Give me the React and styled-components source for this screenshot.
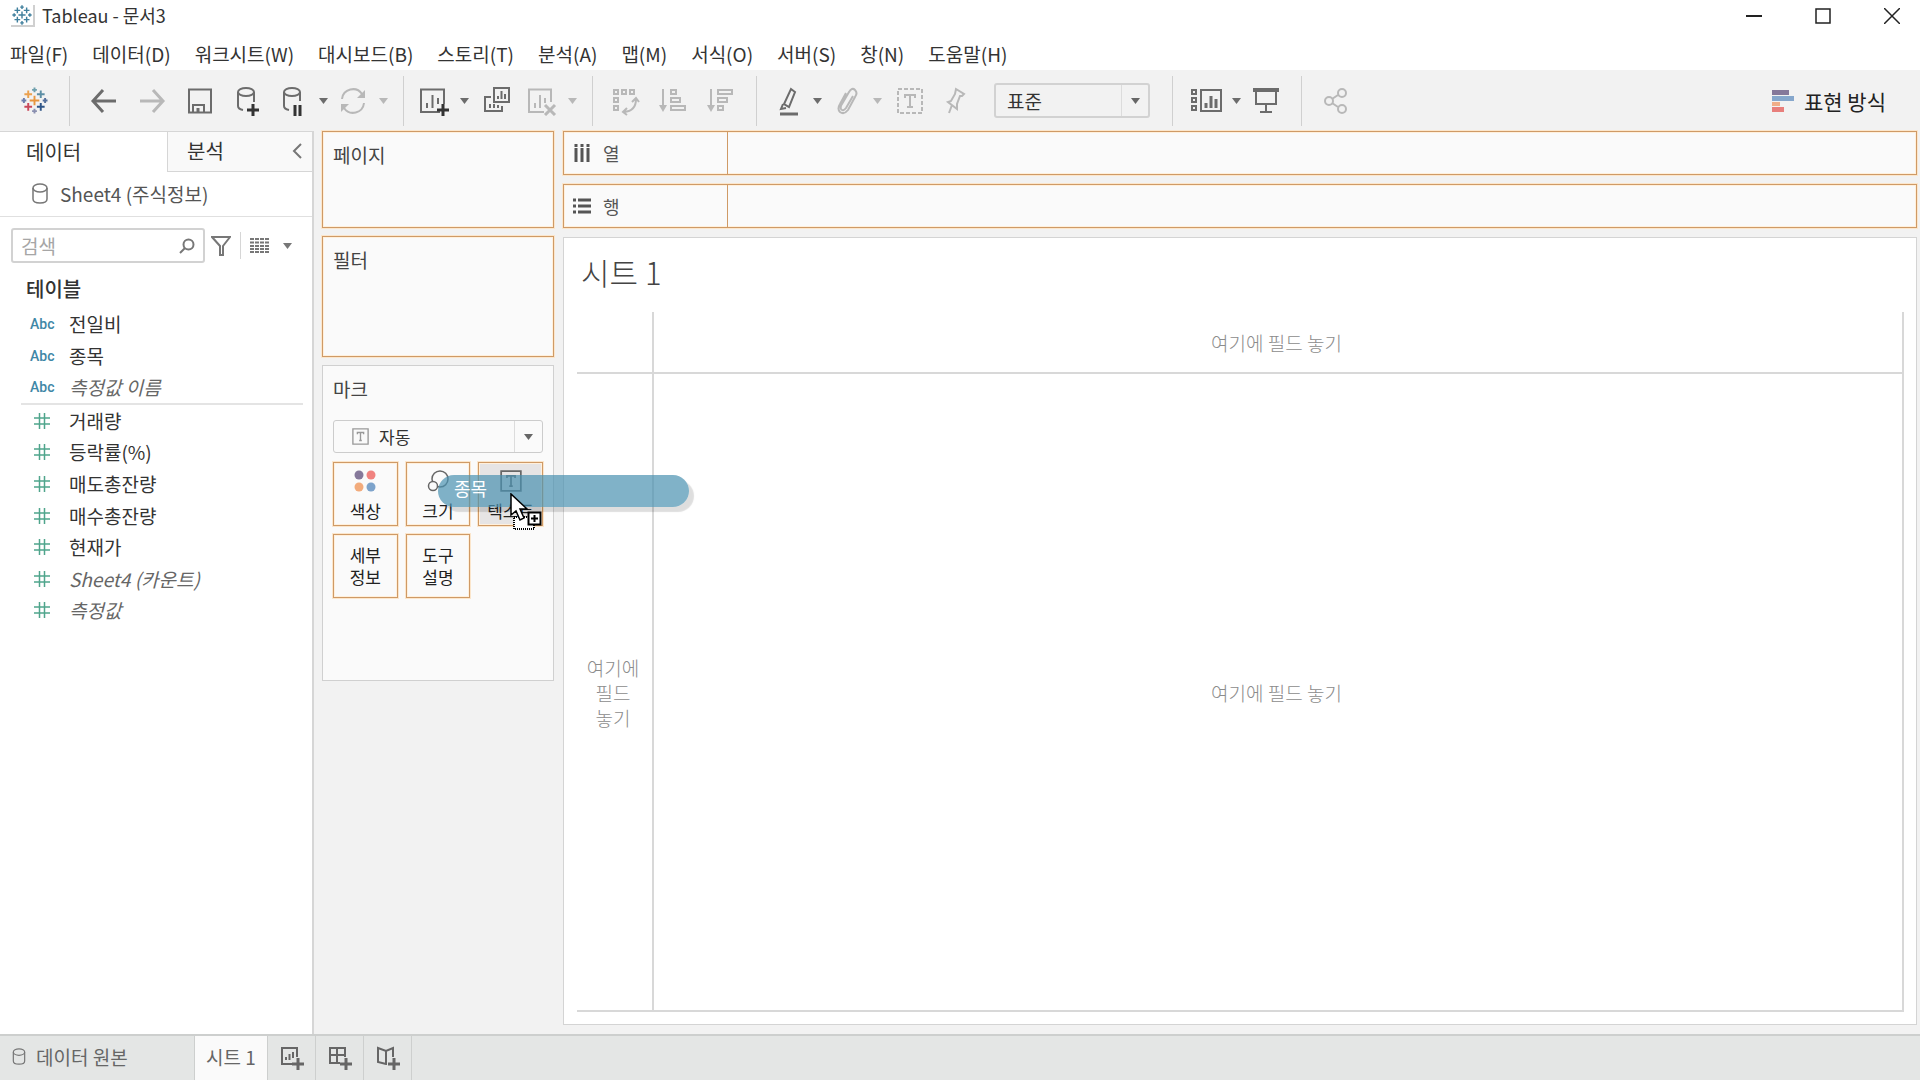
import React, { useState } from "react";
import styled, { createGlobalStyle, css } from "styled-components";

const menus = [
  "파일(F)",
  "데이터(D)",
  "워크시트(W)",
  "대시보드(B)",
  "스토리(T)",
  "분석(A)",
  "맵(M)",
  "서식(O)",
  "서버(S)",
  "창(N)",
  "도움말(H)",
];

const dimensions = [
  { name: "전일비" },
  { name: "종목" },
  { name: "측정값 이름", auto: true },
];

const measures = [
  { name: "거래량" },
  { name: "등락률(%)" },
  { name: "매도총잔량" },
  { name: "매수총잔량" },
  { name: "현재가" },
  { name: "Sheet4 (카운트)", auto: true },
  { name: "측정값", auto: true },
];

// icons

const Icon = ({ w = 30, h = 30, children, ...rest }) => (
  <svg
    width={w}
    height={h}
    viewBox={`0 0 ${w} ${h}`}
    fill="none"
    stroke="currentColor"
    strokeWidth="2"
    aria-hidden="true"
    {...rest}
  >
    {children}
  </svg>
);

const Caret = () => (
  <svg width="9" height="6" viewBox="0 0 9 6" aria-hidden="true">
    <path d="M0 0h9L4.5 6z" fill="currentColor" />
  </svg>
);

const logoMarks = [
  [14, 14, 5, "#e8963f"],
  [7.5, 7.5, 4, "#eba14e"],
  [20.5, 7.5, 4, "#5d8fa5"],
  [7.5, 20.5, 4, "#c9485a"],
  [20.5, 20.5, 4, "#2f5587"],
  [14, 3, 2.5, "#6fa0ad"],
  [14, 25, 2.5, "#8a8fb0"],
  [3, 14, 2.5, "#6d7fae"],
  [25, 14, 2.5, "#55709c"],
];

const TableauLogo = ({ size, color }) => (
  <svg width={size} height={size} viewBox="0 0 28 28" aria-hidden="true">
    {logoMarks.map(([x, y, r, fill]) => (
      <path
        key={`${x}-${y}`}
        d={`M${x - r} ${y}h${r * 2}M${x} ${y - r}v${r * 2}`}
        stroke={color || fill}
        strokeWidth="2"
      />
    ))}
  </svg>
);

const BackIcon = () => (
  <Icon strokeWidth="3">
    <path d="M27 15H5M14 4L4 15l10 11" />
  </Icon>
);

const ForwardIcon = () => (
  <Icon strokeWidth="3">
    <path d="M3 15h23M16 4l10 11-10 11" />
  </Icon>
);

const SaveIcon = () => (
  <Icon>
    <path d="M4 3.500h22v23H4zM8 26v-7h11v7" />
    <path d="M13 26v-4" strokeWidth="3" />
  </Icon>
);

const DbAddIcon = () => (
  <Icon>
    <ellipse cx="13" cy="6" rx="8" ry="4" />
    <path d="M5 6v14q0 3 5 4M21 6v10" />
    <path d="M20 18v12M14 24h12" stroke="#333" strokeWidth="3" />
  </Icon>
);

const DbPauseIcon = () => (
  <Icon>
    <ellipse cx="14" cy="6" rx="8" ry="4" />
    <path d="M6 6v14q0 3 5 4M22 6v9" />
    <path d="M17 19v11M22 19v11" stroke="#333" strokeWidth="3" />
  </Icon>
);

const RefreshIcon = () => (
  <Icon>
    <path d="M4 13A11 11 0 0 1 24 8M26 17A11 11 0 0 1 6 22" />
    <path d="M27 4v8h-8zM3 26v-8h8z" fill="currentColor" stroke="none" />
  </Icon>
);

const NewSheetIcon = () => (
  <Icon>
    <path d="M21 26H2V3.500h23V18" />
    <path d="M8 22v-5M13.500 22V9M19 18v-6" />
    <path d="M24 18v12M18 24h12" stroke="#333" strokeWidth="3" />
  </Icon>
);

const DuplicateIcon = () => (
  <Icon>
    <path d="M12 2h15v14H12zM9 11H3v14h17v-5" />
    <path d="M16 13v-3M19.500 13V5M23 13V8M8 22v-4M12 22v-4M16 22v-3" />
  </Icon>
);

const ClearIcon = () => (
  <Icon>
    <path d="M17 26H2V3.500h22V16" />
    <path d="M8 22v-5M13 22V9M18 17v-5" />
    <path d="M18 19l10 10M28 19L18 29" strokeWidth="3" />
  </Icon>
);

const SwapIcon = () => (
  <Icon>
    <path d="M4 4h4v4H4zM12 4h4v4h-4zM20 4h4v4h-4zM4 12h4v4H4zM4 20h4v4H4z" />
    <path d="M26 13q0 12-12 13M22 16l4-4 3 4M17 22l-4 4 4 3" />
  </Icon>
);

const SortAscIcon = () => (
  <Icon>
    <path d="M5 3v18" />
    <path d="M1 19h8l-4 7z" fill="currentColor" stroke="none" />
    <path d="M13 4h5v4h-5zM13 12h9v4h-9zM13 20h14v4H13z" />
  </Icon>
);

const SortDescIcon = () => (
  <Icon>
    <path d="M5 3v18" />
    <path d="M1 19h8l-4 7z" fill="currentColor" stroke="none" />
    <path d="M12 4h14v4H12zM12 12h9v4h-9zM12 20h5v4h-5z" />
  </Icon>
);

const HighlightIcon = () => (
  <Icon>
    <path d="M19 3l4 3-6 15-5-3zM11 18l-2 5 5-1" />
    <path d="M8 28h18" strokeWidth="3" />
  </Icon>
);

const ClipIcon = () => (
  <Icon>
    <path d="M21 10l-7 12q-3 4-5 1-1-2 1-5l7-12q3-5 6-2t0 7l-7 13q-4 5-8 2-3-3 0-8l6-11" />
  </Icon>
);

const LabelIcon = () => (
  <Icon>
    <path d="M3 3h24v24H3z" strokeDasharray="4 2" />
    <path d="M10 12V9h10v3M15 9v12M12 21h6" />
  </Icon>
);

const PinIcon = () => (
  <Icon>
    <path d="M16 3l8 5-2 2-2 0-3 8v5L8 16l3-1 4-7zM12 19l-3 8" />
  </Icon>
);

const CardsIcon = () => (
  <Icon w={32}>
    <path d="M2 4h4v4H2zM2 12h4v4H2zM2 20h4v4H2zM11 4h20v21H11z" />
    <path d="M16 22v-5M21 22v-12M26 22v-9" strokeWidth="3" />
  </Icon>
);

const PresentIcon = () => (
  <Icon>
    <path d="M2 4h26" strokeWidth="4" />
    <path d="M5 6v12h20V6M15 18v8M9 26h12" />
  </Icon>
);

const ShareIcon = () => (
  <Icon>
    <circle cx="8" cy="15" r="4" />
    <circle cx="21" cy="7" r="4" />
    <circle cx="21" cy="23" r="4" />
    <path d="M11 13l6-4M11 17l6 4" />
  </Icon>
);

const ShowMeIcon = () => (
  <svg width="22" height="24" viewBox="0 0 22 24" aria-hidden="true">
    <path d="M0 1h17v5H0z" fill="#85789a" />
    <path d="M0 7h22v5H0z" fill="#86a7cc" />
    <path d="M0 13h8v4H0z" fill="#f0ae88" />
    <path d="M0 18h12v5H0z" fill="#e87f7c" />
  </svg>
);

const DbIcon = ({ w = 16, h = 21 }) => (
  <svg
    width={w}
    height={h}
    viewBox="0 0 16 21"
    fill="none"
    stroke="#777"
    strokeWidth="1.500"
    aria-hidden="true"
  >
    <path d="M1 5v11q0 4 7 4t7-4V5" />
    <ellipse cx="8" cy="5" rx="7" ry="4" />
  </svg>
);

const HashIcon = () => (
  <Icon w={16} h={16} strokeWidth="1.500">
    <path d="M5.500 0v16M10.500 0v16M0 5h16M0 11h16" />
  </Icon>
);

const SearchIcon = () => (
  <Icon w={16} h={16}>
    <circle cx="9.500" cy="6.500" r="5" />
    <path d="M6 10l-5 5" />
  </Icon>
);

const FunnelIcon = () => (
  <Icon w={20} h={20}>
    <path d="M1 1h18l-7 9v9H9v-9z" />
  </Icon>
);

const GridIcon = () => (
  <Icon w={19} h={15}>
    <path d="M0 1h19M0 4.500h19M0 8h19M0 11h19M0 14h19" strokeDasharray="4 1" />
  </Icon>
);

const TextMarkIcon = ({ size = 19 }) => (
  <svg
    width={size}
    height={size}
    viewBox="0 0 19 19"
    fill="none"
    stroke="currentColor"
    aria-hidden="true"
  >
    <path d="M1 1h17v17H1z" strokeWidth="1.500" />
    <path d="M6 7V5h7v2M9.500 5v9M8 14h3" strokeWidth="1.500" />
  </svg>
);

const ColorIcon = () => (
  <svg width="22" height="22" viewBox="0 0 22 22" aria-hidden="true">
    <circle cx="5" cy="5" r="4.500" fill="#85789a" />
    <circle cx="17" cy="5" r="4.500" fill="#f0827f" />
    <circle cx="5" cy="17" r="4.500" fill="#f2ab7c" />
    <circle cx="17" cy="17" r="4.500" fill="#7da3cb" />
  </svg>
);

const SizeIcon = () => (
  <Icon w={22} h={22} strokeWidth="1.500">
    <circle cx="13" cy="9" r="8" />
    <circle cx="6" cy="16" r="4.500" fill="#fafafa" />
  </Icon>
);

const ColumnsIcon = () => (
  <Icon w={18} h={18} strokeWidth="3">
    <path d="M3 0v3M9 0v3M15 0v3M3 4v14M9 4v14M15 4v14" />
  </Icon>
);

const RowsIcon = () => (
  <Icon w={18} h={18} strokeWidth="3">
    <path d="M0 3h3M5 3h13M0 9h3M5 9h13M0 15h3M5 15h13" />
  </Icon>
);

const PlusBadge = () => <path d="M18 12v12M12 18h12" strokeWidth="3" />;

const TabSheetIcon = () => (
  <Icon w={24} h={24}>
    <path d="M12 18H2V2h15v9" />
    <path d="M6 14v-3M9.500 14V8M13 12V6" />
    <PlusBadge />
  </Icon>
);

const TabDashIcon = () => (
  <Icon w={24} h={24}>
    <path d="M12 17H2V2h15v9M2 9h15M9 2v15" />
    <PlusBadge />
  </Icon>
);

const TabStoryIcon = () => (
  <Icon w={24} h={24}>
    <path d="M11 18l-1 0-8-2V2l8 3 7-3v9M10 5v13" />
    <PlusBadge />
  </Icon>
);

const CopyCursor = () => (
  <svg width="32" height="40" viewBox="0 0 32 40" aria-hidden="true">
    <path d="M4 24h20v12H4z" fill="#fff" stroke="#000" strokeDasharray="1 1" strokeWidth="2" />
    <path
      d="M1 1v21l5-4 4 9 4-2-4-9h7z"
      fill="#fff"
      stroke="#000"
      strokeWidth="1.500"
    />
    <path d="M18.500 19.500h12v12h-12z" fill="#fff" stroke="#000" strokeWidth="2" />
    <path d="M24.500 22v7M21 25.500h7" stroke="#000" strokeWidth="2" />
  </svg>
);

const App = () => {
  const [search, setSearch] = useState("");
  const [fit, setFit] = useState("표준");
  const [mark, setMark] = useState("자동");

  return (
    <Page>
      <GlobalStyle />
      <TitleBar>
        <AppIcon>
          <TableauLogo size={20} color="#3f7f9d" />
        </AppIcon>
        <TitleText>Tableau - 문서3</TitleText>
        <WindowButtons>
          <WindowButton aria-label="최소화">
            <Icon w={16} h={16}>
              <path d="M0 8h16" />
            </Icon>
          </WindowButton>
          <WindowButton aria-label="최대화">
            <Icon w={16} h={16}>
              <path d="M1 1h14v14H1z" strokeWidth="1.500" />
            </Icon>
          </WindowButton>
          <WindowButton aria-label="닫기">
            <Icon w={16} h={16} strokeWidth="1.500">
              <path d="M0 0l16 16M16 0L0 16" />
            </Icon>
          </WindowButton>
        </WindowButtons>
      </TitleBar>

      <MenuBar>
        {menus.map((m) => (
          <MenuButton key={m}>{m}</MenuButton>
        ))}
      </MenuBar>

      <Toolbar>
        <ToolGroup $left={10} $right={11}>
          <ToolButton aria-label="시작 페이지">
            <TableauLogo size={27} />
          </ToolButton>
        </ToolGroup>
        <ToolGroup $left={10} $right={11}>
          <ToolButton aria-label="실행 취소">
            <BackIcon />
          </ToolButton>
          <ToolButton aria-label="다시 실행" disabled>
            <ForwardIcon />
          </ToolButton>
          <ToolButton aria-label="저장">
            <SaveIcon />
          </ToolButton>
          <ToolButton aria-label="새 데이터 원본">
            <DbAddIcon />
          </ToolButton>
          <ToolButton $split aria-label="자동 업데이트 일시 중지">
            <DbPauseIcon />
          </ToolButton>
          <CaretButton aria-label="자동 업데이트 메뉴">
            <Caret />
          </CaretButton>
          <ToolButton $split aria-label="새로 고침" disabled>
            <RefreshIcon />
          </ToolButton>
          <CaretButton aria-label="새로 고침 메뉴" disabled>
            <Caret />
          </CaretButton>
        </ToolGroup>
        <ToolGroup $left={9} $right={11}>
          <ToolButton $split aria-label="새 워크시트">
            <NewSheetIcon />
          </ToolButton>
          <CaretButton aria-label="새 워크시트 메뉴">
            <Caret />
          </CaretButton>
          <ToolButton aria-label="복제">
            <DuplicateIcon />
          </ToolButton>
          <ToolButton $split aria-label="시트 지우기" disabled>
            <ClearIcon />
          </ToolButton>
          <CaretButton aria-label="시트 지우기 메뉴" disabled>
            <Caret />
          </CaretButton>
        </ToolGroup>
        <ToolGroup $left={8} $right={11}>
          <ToolButton aria-label="바꾸기" disabled>
            <SwapIcon />
          </ToolButton>
          <ToolButton aria-label="오름차순" disabled>
            <SortAscIcon />
          </ToolButton>
          <ToolButton aria-label="내림차순" disabled>
            <SortDescIcon />
          </ToolButton>
        </ToolGroup>
        <ToolGroup $left={9} $right={22}>
          <ToolButton $split aria-label="하이라이트">
            <HighlightIcon />
          </ToolButton>
          <CaretButton aria-label="하이라이트 메뉴">
            <Caret />
          </CaretButton>
          <ToolButton $split aria-label="그룹" disabled>
            <ClipIcon />
          </ToolButton>
          <CaretButton aria-label="그룹 메뉴" disabled>
            <Caret />
          </CaretButton>
          <ToolButton aria-label="레이블 표시" disabled>
            <LabelIcon />
          </ToolButton>
          <ToolButton $split aria-label="축 고정" disabled>
            <PinIcon />
          </ToolButton>
          <FitSelect>
            <Select
              aria-label="맞춤"
              value={fit}
              onChange={(e) => setFit(e.target.value)}
            >
              <option>표준</option>
              <option>전체 보기</option>
            </Select>
            <SelectArrow $width={27}>
              <Caret />
            </SelectArrow>
          </FitSelect>
        </ToolGroup>
        <ToolGroup $left={12} $right={14}>
          <ToolButton $split aria-label="카드 표시/숨기기">
            <CardsIcon />
          </ToolButton>
          <CaretButton aria-label="카드 메뉴">
            <Caret />
          </CaretButton>
          <ToolButton $split aria-label="프레젠테이션 모드">
            <PresentIcon />
          </ToolButton>
        </ToolGroup>
        <ToolButton $share aria-label="공유" disabled>
          <ShareIcon />
        </ToolButton>
        <ShowMe>
          <ShowMeIcon />
          표현 방식
        </ShowMe>
      </Toolbar>

      <Workspace>
        <DataPane>
          <PaneTabs>
            <PaneTab $active>데이터</PaneTab>
            <PaneTab>분석</PaneTab>
            <Collapse aria-label="접기">
              <Icon w={10} h={16}>
                <path d="M9 1L2 8l7 7" />
              </Icon>
            </Collapse>
          </PaneTabs>
          <Source>
            <DbIcon />
            Sheet4 (주식정보)
          </Source>
          <SearchRow>
            <SearchBox>
              <SearchInput
                aria-label="검색"
                placeholder="검색"
                value={search}
                onChange={(e) => setSearch(e.target.value)}
              />
              <SearchIcon />
            </SearchBox>
            <PaneButton aria-label="필터">
              <FunnelIcon />
            </PaneButton>
            <ViewButtons>
              <PaneButton aria-label="보기">
                <GridIcon />
              </PaneButton>
              <PaneButton aria-label="보기 메뉴">
                <Caret />
              </PaneButton>
            </ViewButtons>
          </SearchRow>
          <TablesTitle>테이블</TablesTitle>
          <FieldList $height={95}>
            {dimensions.map((f) => (
              <Field key={f.name} $auto={f.auto}>
                <FieldType>Abc</FieldType>
                {f.name}
              </Field>
            ))}
          </FieldList>
          <FieldDivider />
          <FieldList $height={221}>
            {measures.map((f) => (
              <Field key={f.name} $auto={f.auto}>
                <FieldType $measure>
                  <HashIcon />
                </FieldType>
                {f.name}
              </Field>
            ))}
          </FieldList>
        </DataPane>

        <Cards>
          <Card $drop $height={97}>
            <CardTitle>페이지</CardTitle>
          </Card>
          <Card $drop $height={121}>
            <CardTitle>필터</CardTitle>
          </Card>
          <Card $height={316}>
            <CardTitle>마크</CardTitle>
            <MarkSelect>
              <MarkSelectIcon>
                <TextMarkIcon size={17} />
              </MarkSelectIcon>
              <Select
                $mark
                aria-label="마크 유형"
                value={mark}
                onChange={(e) => setMark(e.target.value)}
              >
                <option>자동</option>
                <option>막대</option>
                <option>라인</option>
              </Select>
              <SelectArrow $width={28}>
                <Caret />
              </SelectArrow>
            </MarkSelect>
            <MarkGrid>
              <MarkButton>
                <ColorIcon />
                <span>색상</span>
              </MarkButton>
              <MarkButton>
                <SizeIcon />
                <span>크기</span>
              </MarkButton>
              <MarkButton $hover>
                <TextMarkIcon size={22} />
                <span>텍스트</span>
              </MarkButton>
              <MarkButton>
                세부
                <br />
                정보
              </MarkButton>
              <MarkButton>
                도구
                <br />
                설명
              </MarkButton>
            </MarkGrid>
            <DragPill>종목</DragPill>
            <DragCursor>
              <CopyCursor />
            </DragCursor>
          </Card>
        </Cards>

        <Main>
          <Shelf>
            <ShelfName>
              <ColumnsIcon />열
            </ShelfName>
          </Shelf>
          <Shelf>
            <ShelfName>
              <RowsIcon />행
            </ShelfName>
          </Shelf>
          <Sheet>
            <SheetTitle>시트 1</SheetTitle>
            <DropGrid>
              <DropCell $bottom $right />
              <DropCell $bottom>여기에 필드 놓기</DropCell>
              <DropCell $right>
                여기에
                <br />
                필드
                <br />
                놓기
              </DropCell>
              <DropCell>여기에 필드 놓기</DropCell>
            </DropGrid>
          </Sheet>
        </Main>
      </Workspace>

      <BottomTabs>
        <SourceTab>
          <DbIcon w={14} h={17} />
          데이터 원본
        </SourceTab>
        <SheetTab>시트 1</SheetTab>
        <NewTab aria-label="새 워크시트">
          <TabSheetIcon />
        </NewTab>
        <NewTab aria-label="새 대시보드">
          <TabDashIcon />
        </NewTab>
        <NewTab aria-label="새 스토리">
          <TabStoryIcon />
        </NewTab>
      </BottomTabs>
    </Page>
  );
};

const GlobalStyle = createGlobalStyle`
  * {
    box-sizing: border-box;
  }

  body {
    margin: 0;
    background: #f2f2f2;
  }

  body, button, input, select {
    font-family: "Noto Sans CJK KR", sans-serif;
    font-size: 19px;
    color: #333;
  }

  button {
    padding: 0;
    border: 0;
    background: none;
  }
`;

const Page = styled.div`
  min-height: 100vh;
  display: flex;
  flex-direction: column;
`;

const TitleBar = styled.header`
  height: 32px;
  display: flex;
  align-items: center;
  padding-left: 11px;
  background: #fff;
`;

const AppIcon = styled.div`
  width: 24px;
  height: 22px;
  display: flex;
  align-items: center;
  justify-content: center;
  border-right: 2px solid #d0d0d0;
  border-bottom: 2px solid #d0d0d0;
`;

const TitleText = styled.span`
  margin-left: 7px;
  padding-bottom: 2px;
  font-size: 18px;
  line-height: 30px;
`;

const WindowButtons = styled.div`
  display: flex;
  gap: 13px;
  margin-left: auto;
`;

const WindowButton = styled.button`
  width: 56px;
  height: 32px;
  display: flex;
  align-items: center;
  justify-content: center;
  color: #222;
`;

const MenuBar = styled.nav`
  display: flex;
  gap: 24px;
  padding: 7px 10px 1px;
  background: #fff;
`;

const MenuButton = styled.button`
  height: 30px;
  line-height: 30px;
  white-space: nowrap;
`;

const Toolbar = styled.div`
  height: 61px;
  display: flex;
  align-items: center;
  background: #f2f2f2;
`;

const ToolGroup = styled.div`
  height: 50px;
  display: flex;
  align-items: center;
  padding-left: ${(p) => p.$left}px;
  padding-right: ${(p) => p.$right}px;
  border-right: 1px solid #d0d0d0;
`;

const ToolButton = styled.button`
  width: ${(p) => (p.$split ? 42 : 48)}px;
  height: 40px;
  display: flex;
  align-items: center;
  justify-content: center;
  color: #6c6c6c;
  margin-left: ${(p) => (p.$share ? 10 : 0)}px;

  &:disabled {
    color: #b8b8b8;
  }
`;

const CaretButton = styled.button`
  width: 18px;
  height: 40px;
  color: #6c6c6c;

  svg {
    display: block;
    margin: auto;
  }

  &:disabled {
    color: #b8b8b8;
  }
`;

const ShowMe = styled.button`
  display: flex;
  align-items: center;
  gap: 10px;
  margin-left: auto;
  padding-right: 34px;
  color: #222;
  font-size: 21px;
`;

const selectFrame = css`
  display: flex;
  border: 2px solid #d2d2d2;
  border-radius: 3px;
`;

const FitSelect = styled.div`
  ${selectFrame}
  width: 156px;
  height: 35px;
  margin-left: 18px;
`;

const Select = styled.select`
  flex: 1;
  min-width: 0;
  padding: 0 ${(p) => (p.$mark ? 10 : 11)}px;
  border: 0;
  background: none;
  appearance: none;
  font-size: ${(p) => (p.$mark ? 17 : 19)}px;
`;

const SelectArrow = styled.span`
  width: ${(p) => p.$width}px;
  display: flex;
  align-items: center;
  justify-content: center;
  border-left: 1px solid #dcdcdc;
  color: #666;
  pointer-events: none;
`;

const Workspace = styled.main`
  flex: 1;
  display: flex;
`;

const DataPane = styled.aside`
  width: 314px;
  flex-shrink: 0;
  border-top: 1px solid #d6d6d6;
  border-right: 2px solid #d6d6d6;
  background: #fff;
`;

const PaneTabs = styled.div`
  height: 40px;
  display: flex;
`;

const PaneTab = styled.button`
  width: ${(p) => (p.$active ? 167 : 106)}px;
  padding-left: ${(p) => (p.$active ? 26 : 19)}px;
  padding-bottom: 2px;
  text-align: left;
  font-size: 20px;

  ${(p) =>
    !p.$active &&
    css`
      border-left: 1px solid #d6d6d6;
      border-bottom: 1px solid #d6d6d6;
      background: #f9f9f9;
    `}
`;

const Collapse = styled.button`
  flex: 1;
  padding-left: 8px;
  padding-bottom: 2px;
  border-bottom: 1px solid #d6d6d6;
  background: #f9f9f9;
  color: #777;
`;

const Source = styled.div`
  height: 45px;
  display: flex;
  align-items: center;
  gap: 12px;
  padding: 0 0 2px 32px;
  border-bottom: 1px solid #e0e0e0;
  color: #555;
`;

const SearchRow = styled.div`
  display: flex;
  align-items: center;
  padding: 11px 10px 0 11px;
`;

const SearchBox = styled.div`
  width: 194px;
  height: 35px;
  display: flex;
  align-items: center;
  padding-right: 8px;
  border: 2px solid #d2d2d2;
  border-radius: 3px;
  color: #777;
`;

const SearchInput = styled.input`
  flex: 1;
  min-width: 0;
  padding: 0 8px;
  border: 0;
  background: none;

  &::placeholder {
    color: #a6a6a6;
    opacity: 1;
  }
`;

const PaneButton = styled.button`
  display: flex;
  margin-left: 6px;
  color: #777;
`;

const ViewButtons = styled.div`
  height: 27px;
  display: flex;
  align-items: center;
  gap: 8px;
  margin-left: 9px;
  padding-left: 3px;
  border-left: 1px solid #d6d6d6;
`;

const TablesTitle = styled.h2`
  margin: 11px 0 4px;
  padding-left: 26px;
  font-size: 20px;
  font-weight: 500;
  line-height: 30px;
`;

const FieldList = styled.ul`
  min-height: ${(p) => p.$height}px;
  display: flex;
  flex-direction: column;
  margin: 0;
  padding: 0;
  list-style: none;
`;

const Field = styled.li`
  flex: 1;
  display: flex;
  align-items: center;
  line-height: 28px;
  color: ${(p) => (p.$auto ? "#666" : "#333")};
  font-style: ${(p) => (p.$auto ? "italic" : "normal")};
`;

const FieldType = styled.span`
  width: 69px;
  display: flex;
  padding-left: ${(p) => (p.$measure ? 34 : 30)}px;
  color: ${(p) => (p.$measure ? "#4fa58c" : "#3f87a6")};
  font-family: Roboto, sans-serif;
  font-size: 14px;
  font-weight: 500;
  font-style: normal;
`;

const FieldDivider = styled.div`
  height: 2px;
  margin: 0 9px 0 21px;
  background: #e4e4e4;
`;

const Cards = styled.section`
  width: 232px;
  flex-shrink: 0;
  display: flex;
  flex-direction: column;
  gap: 8px;
  margin-left: 8px;
`;

const dropTarget = css`
  border: 1px solid #cf9a66;
  box-shadow: 0 0 0 1px #fbe6cc, inset 0 0 0 1px #fff0dc;
`;

const Card = styled.div`
  position: relative;
  min-height: ${(p) => p.$height}px;
  padding: 9px 10px;
  border: 1px solid #d0d0d0;
  background: #fafafa;
  ${(p) => p.$drop && dropTarget}
`;

const CardTitle = styled.h3`
  margin: 0;
  font-size: 19px;
  font-weight: 400;
  line-height: 28px;
  color: #444;
`;

const MarkSelect = styled.div`
  ${selectFrame}
  height: 33px;
  margin-top: 17px;
  border-width: 1px;
  border-color: #ccc;
`;

const MarkSelectIcon = styled.span`
  display: flex;
  align-items: center;
  padding-left: 18px;
  color: #999;
`;

const MarkGrid = styled.div`
  display: grid;
  grid-template-columns: repeat(3, 1fr);
  gap: 8px;
  margin-top: 9px;
`;

const MarkButton = styled.button`
  height: 64px;
  ${dropTarget}
  background: ${(p) => (p.$hover ? "#e6e4e4" : "#fafafa")};
  color: #222;
  font-size: 17px;
  line-height: 22px;
  white-space: nowrap;

  svg {
    display: block;
    margin: 4px auto 8px;
    color: #666;
  }
`;

// the field being dragged, floats over the cards and the sheet
const DragPill = styled.div`
  position: absolute;
  z-index: 2;
  left: 115px;
  top: 109px;
  width: 251px;
  height: 32px;
  padding-left: 16px;
  border-radius: 16px;
  background: rgba(74, 145, 176, 0.7);
  box-shadow: 5px 5px 1px rgba(0, 0, 0, 0.13);
  color: #fff;
  font-size: 18px;
  line-height: 27px;
`;

const DragCursor = styled.div`
  position: absolute;
  z-index: 3;
  left: 187px;
  top: 127px;
`;

const Main = styled.section`
  flex: 1;
  min-width: 0;
  display: flex;
  flex-direction: column;
  gap: 9px;
  margin: 0 3px 9px 9px;
`;

const Shelf = styled.div`
  height: 44px;
  display: flex;
  background: #fafafa;
  ${dropTarget}
`;

const ShelfName = styled.div`
  width: 164px;
  display: flex;
  align-items: center;
  gap: 12px;
  padding-left: 9px;
  border-right: 1px solid #cf9a66;
  font-size: 18px;
  color: #555;
`;

const Sheet = styled.div`
  flex: 1;
  display: flex;
  flex-direction: column;
  padding: 12px 12px 12px 13px;
  border: 1px solid #d4d4d4;
  background: #fff;
`;

const SheetTitle = styled.h1`
  margin: 0 0 18px;
  padding-left: 4px;
  font-size: 31px;
  font-weight: 300;
  line-height: 44px;
  color: #444;
`;

const DropGrid = styled.div`
  flex: 1;
  display: grid;
  grid-template-columns: 77px 1fr;
  grid-template-rows: 62px 1fr;
  border-right: 2px solid #d8d8d8;
  border-bottom: 2px solid #d8d8d8;
`;

const DropCell = styled.div`
  display: flex;
  align-items: center;
  justify-content: center;
  padding-right: 3px;
  text-align: center;
  line-height: 25px;
  font-size: 19px;
  font-weight: 300;
  color: #8c8c8c;
  border-right: ${(p) => (p.$right ? "2px solid #d8d8d8" : "0")};
  border-bottom: ${(p) => (p.$bottom ? "2px solid #d8d8d8" : "0")};
`;

const BottomTabs = styled.footer`
  height: 46px;
  display: flex;
  border-top: 2px solid #cdcfce;
  background: #e4e6e5;
`;

const SourceTab = styled.button`
  width: 194px;
  display: flex;
  align-items: center;
  gap: 10px;
  padding: 0 0 3px 12px;
  color: #666;
`;

const SheetTab = styled.button`
  width: 74px;
  padding-bottom: 3px;
  border: solid #cdcfce;
  border-width: 0 1px;
  background: #fafafa;
  color: #666;
`;

const NewTab = styled.button`
  width: 48px;
  display: flex;
  align-items: center;
  justify-content: center;
  border-right: 1px solid #cdcfce;
  color: #666;
`;

export default App;
